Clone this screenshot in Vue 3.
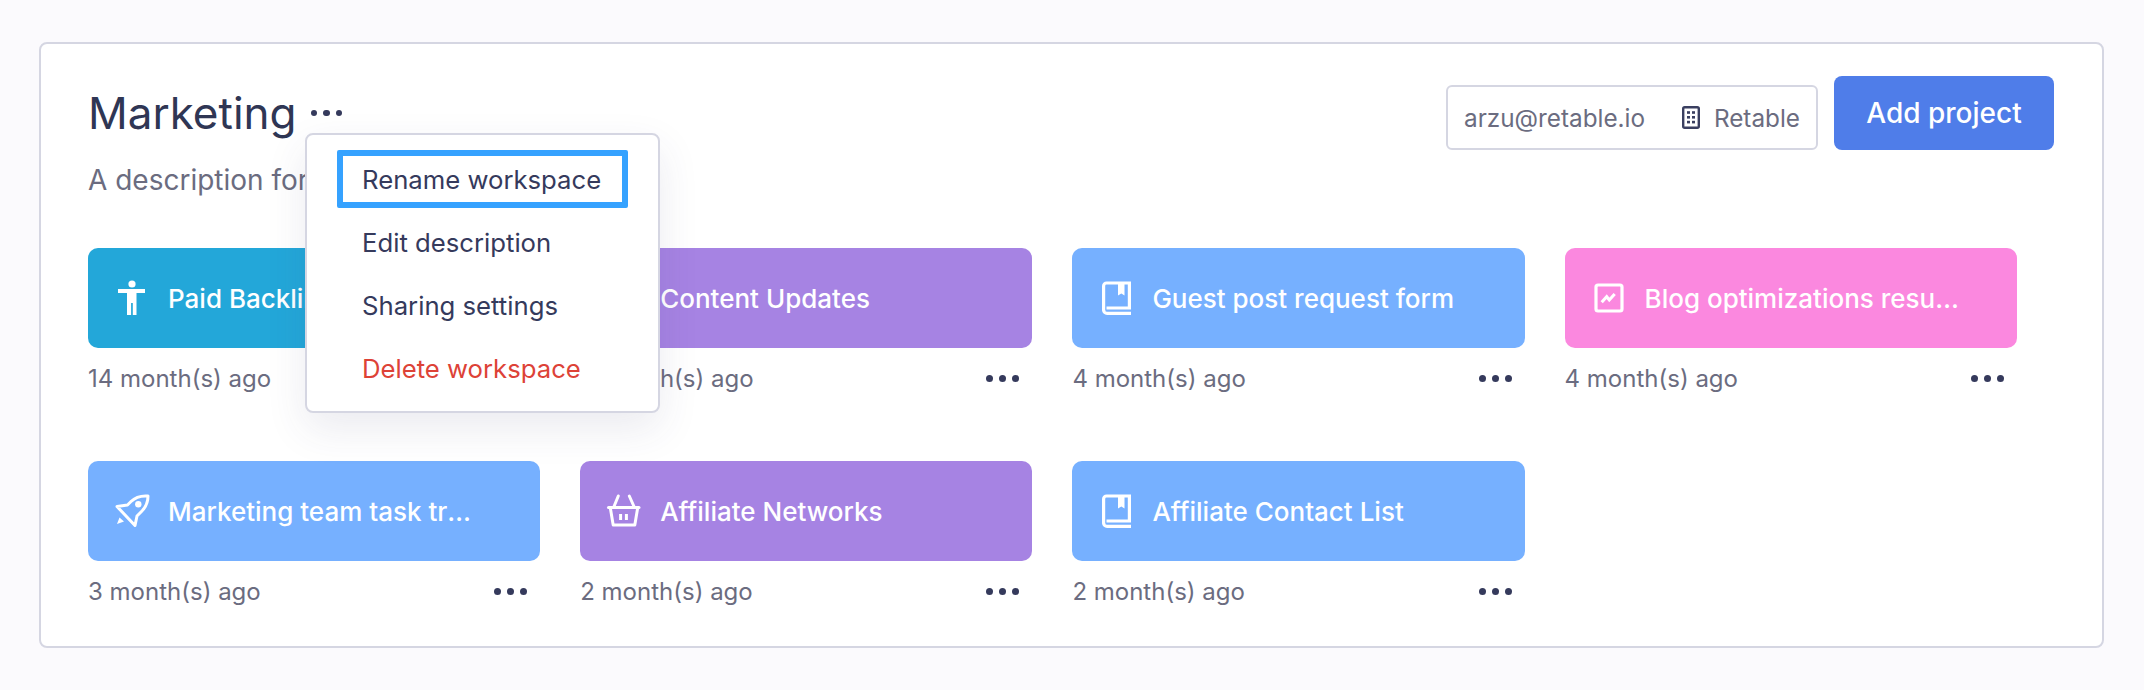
<script setup>
const projects = [
  { name: 'Paid Backlinks', age: '14 month(s) ago', color: '#23a7d9', icon: 'person' },
  { name: 'Content Updates', age: '4 month(s) ago', color: '#a683e3', icon: 'basket' },
  { name: 'Guest post request form', age: '4 month(s) ago', color: '#76b0ff', icon: 'book' },
  { name: 'Blog optimizations results and more', age: '4 month(s) ago', color: '#fb88df', icon: 'chart' },
  { name: 'Marketing team task tracker list', age: '3 month(s) ago', color: '#76b0ff', icon: 'rocket' },
  { name: 'Affiliate Networks', age: '2 month(s) ago', color: '#a683e3', icon: 'basket' },
  { name: 'Affiliate Contact List', age: '2 month(s) ago', color: '#76b0ff', icon: 'book' }
];
</script>

<template>
  <div class="page">
    <section class="board">
      <header class="head">
        <div class="head-left">
          <div class="title-row">
            <h1>Marketing</h1>
            <span class="dots title-dots"><i></i><i></i><i></i></span>
          </div>
          <p class="desc">A description for this workspace</p>
        </div>
        <div class="head-right">
          <div class="account">
            <span>arzu@retable.io</span>
            <span class="org">
              <svg width="18" height="23" viewBox="0 0 18 23">
                <rect x="1.2" y="1.2" width="15.6" height="20.6" rx="1.5" fill="none" stroke="#3a3f60" stroke-width="2.4" />
                <g fill="#3a3f60">
                  <rect x="5" y="5.2" width="3" height="2.6" /><rect x="10" y="5.2" width="3" height="2.6" />
                  <rect x="5" y="10" width="3" height="2.6" /><rect x="10" y="10" width="3" height="2.6" />
                  <rect x="5" y="14.8" width="3" height="2.6" /><rect x="10" y="14.8" width="3" height="2.6" />
                </g>
              </svg>
              Retable
            </span>
          </div>
          <button class="add">Add project</button>
        </div>
      </header>

      <div class="grid">
        <div v-for="p in projects" :key="p.name" class="project">
          <div class="tile" :style="{ background: p.color }">
            <svg class="tile-icon" width="40" height="40" viewBox="0 0 40 40">
              <g v-if="p.icon === 'person'" fill="#fff">
                <circle cx="20" cy="6" r="3.6" />
                <path d="M6 11h27v4h-8.500v22h-3.700V25h-1.700v12H15V15H6z" />
              </g>
              <g v-else-if="p.icon === 'book'" fill="none" stroke="#fff" stroke-width="3.200">
                <path d="M7.600 32.500V8a3 3 0 0 1 3-3h22.800v25H10.500" />
                <path d="M7.600 32a3.500 3.500 0 0 0 3.500 3.400H35" />
                <path d="M22 5h6.500v12.500l-3.200-2-3.300 2z" fill="#fff" stroke="none" />
              </g>
              <g v-else-if="p.icon === 'chart'" fill="none" stroke="#fff" stroke-width="3.200">
                <rect x="7" y="7" width="26" height="26" rx="2" />
                <path d="M12.700 24.300l5-5.600 2.600 3.300 5.400-6" stroke-width="3" />
              </g>
              <g v-else-if="p.icon === 'rocket'" fill="none" stroke="#fff" stroke-width="3" stroke-linejoin="round">
                <path d="M36 5C30 4.500 24 5.500 19 10.500L15.500 14 5 15.500 23 34.500 25 25l4.500-4.500C35 15 36 10 36 5z" />
                <circle cx="26.300" cy="13.300" r="3.200" fill="#fff" stroke="none" />
                <path d="M5 33l2.500-6.500 4.500 4z" fill="#fff" stroke="none" />
              </g>
              <g v-else fill="none" stroke="#fff" stroke-width="3" stroke-linecap="round" stroke-linejoin="round">
                <path d="M4.500 16.500H35" />
                <path d="M14.300 5L10 15.500M25.300 5L30 15.500" />
                <path d="M6.500 18l2.700 16h21.600l2.700-16" />
                <path d="M16.600 23v6M22.400 23v6" stroke-linecap="butt" />
              </g>
            </svg>
            <span class="tile-name">{{ p.name }}</span>
          </div>
          <div class="meta">
            <span>{{ p.age }}</span>
            <span class="dots"><i></i><i></i><i></i></span>
          </div>
        </div>
      </div>

      <div class="menu">
        <a class="item focused">Rename workspace</a>
        <a class="item">Edit description</a>
        <a class="item">Sharing settings</a>
        <a class="item danger">Delete workspace</a>
      </div>
    </section>
  </div>
</template>

<style scoped>
.page {
  padding: 42px 40px 42px 39px;
  font-family: Inter, "Liberation Sans", sans-serif;
}
.board {
  position: relative;
  height: 606px;
  box-sizing: border-box;
  padding: 32px 48px 0 47px;
  background: #fff;
  border: 2px solid #d5d6e2;
  border-radius: 8px;
}
.head {
  display: flex;
  justify-content: space-between;
  align-items: flex-start;
}
.title-row {
  display: flex;
  align-items: center;
  gap: 14px;
  height: 74px;
}
h1 {
  margin: 0;
  font-size: 44px;
  font-weight: 400;
  color: #2f3654;
}
.desc {
  margin: 13px 0 0;
  height: 34px;
  font-size: 28px;
  line-height: 34px;
  color: #6b6c80;
}
.head-right {
  display: flex;
  align-items: flex-end;
  gap: 16px;
  height: 74px;
}
.account {
  display: flex;
  align-items: center;
  justify-content: space-between;
  box-sizing: border-box;
  width: 372px;
  height: 65px;
  padding: 0 16px;
  border: 2px solid #d5d6e2;
  border-radius: 6px;
  font-size: 24.300px;
  color: #6b6c80;
}
.org {
  display: flex;
  align-items: center;
  gap: 14px;
}
.add {
  width: 220px;
  height: 74px;
  border: 0;
  border-radius: 8px;
  background: #4f7de9;
  color: #fff;
  font-family: inherit;
  font-size: 28px;
  font-weight: 500;
}
.grid {
  display: grid;
  grid-template-columns: repeat(4, 452.200px);
  column-gap: 40px;
  margin-top: 51px;
}
.project {
  height: 213px;
}
.tile {
  display: flex;
  align-items: center;
  gap: 16px;
  box-sizing: border-box;
  height: 100px;
  padding: 0 24px;
  border-radius: 10px;
  color: #fff;
  font-size: 26px;
  font-weight: 500;
}
.tile-icon {
  flex: none;
}
.tile-name {
  max-width: 316px;
  overflow: hidden;
  white-space: nowrap;
  text-overflow: ellipsis;
}
.meta {
  display: flex;
  align-items: center;
  justify-content: space-between;
  height: 30px;
  margin-top: 15px;
  padding-right: 13px;
  font-size: 24px;
  color: #6b6c80;
}
.dots {
  display: inline-flex;
  gap: 6px;
}
.dots i {
  width: 7px;
  height: 7px;
  border-radius: 50%;
  background: #353a5c;
}
.title-dots i {
  width: 6.500px;
  height: 6.500px;
}
.menu {
  position: absolute;
  left: 264px;
  top: 89px;
  box-sizing: border-box;
  width: 355px;
  height: 280px;
  padding: 15px 30px;
  background: #fff;
  border: 2px solid #d5d6e2;
  border-radius: 8px;
  box-shadow: 0 16px 40px rgba(60, 60, 110, 0.1);
}
.item {
  display: flex;
  align-items: center;
  box-sizing: border-box;
  height: 63px;
  padding-left: 25px;
  font-size: 25.700px;
  color: #353a5c;
}
.item.focused {
  height: 58px;
  margin-bottom: 2.500px;
  padding-left: 19px;
  border: 6px solid #35a2ff;
  border-radius: 2px;
}
.item.danger {
  color: #dd4237;
}
</style>

<style>
body {
  background: #fbfafd;
}
</style>
